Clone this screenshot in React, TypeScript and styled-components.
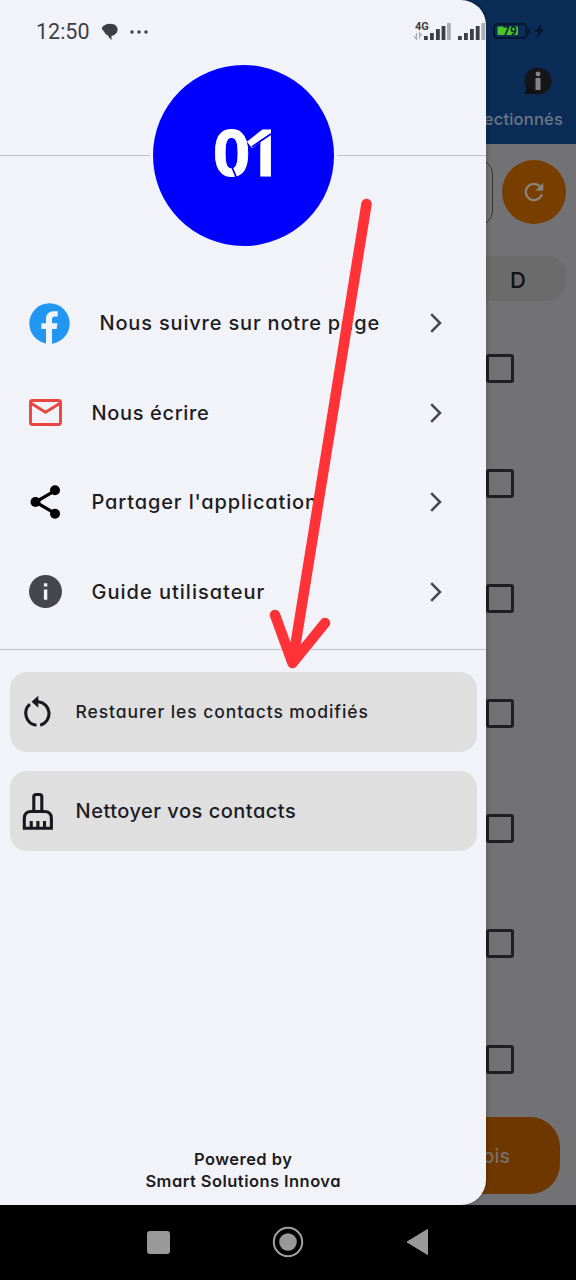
import React from "react";
import styled, { createGlobalStyle } from "styled-components";

const GlobalStyle = createGlobalStyle`
  * { box-sizing: border-box; }
  body { margin: 0; background: #000; font-family: Inter, "Noto Sans", sans-serif; font-feature-settings: "cv11"; }
`;

const Screen = styled.div`
  position: relative;
  display: flex;
  flex-direction: column;
  width: 576px;
  height: 1280px;
  overflow: hidden;
`;

const Page = styled.main`
  display: flex;
  flex-direction: column;
  height: 1205px;
  background: #727274;
`;

const Header = styled.header`
  display: flex;
  flex-direction: column;
  align-items: flex-end;
  height: 144px;
  padding: 65px 13px 0 0;
  background: #0b2c56;
  svg { margin-right: 11px; }
`;

const HeaderLabel = styled.span`
  margin-top: 11px;
  font-size: 16.5px;
  font-weight: 500;
  line-height: 22px;
  letter-spacing: 0.2px;
  color: #6c7787;
`;

const SearchRow = styled.div`
  display: flex;
  align-items: center;
  gap: 9.5px;
  height: 96px;
  padding-right: 10px;
`;

const SearchBox = styled.div`
  flex: 1;
  height: 67px;
  border: 1.5px solid #353539;
  border-radius: 15px;
`;

const RefreshButton = styled.button`
  display: grid;
  place-items: center;
  width: 64px;
  height: 64px;
  padding: 0;
  border: 0;
  border-radius: 50%;
  background: #783e00;
`;

const ColumnHeader = styled.div`
  display: flex;
  align-items: center;
  justify-content: flex-end;
  height: 45px;
  margin: 16px 10px 0 0;
  padding: 2px 40px 0 0;
  border-radius: 18px;
  background: #6b6b6b;
  color: #111115;
  font-size: 22px;
  font-weight: 500;
  line-height: 1;
`;

const CheckList = styled.div`
  display: flex;
  flex-direction: column;
  gap: 86.2px;
  margin: 52.5px 62px 0 0;
  align-items: flex-end;
`;

const CheckBox = styled.div`
  width: 28px;
  height: 29px;
  border: 3px solid #1e1e23;
  border-radius: 3px;
`;

const ActionButton = styled.div`
  display: flex;
  align-items: center;
  justify-content: flex-end;
  height: 77px;
  margin: auto 16px 11px 0;
  padding-right: 50px;
  border-radius: 30px;
  background: #6e3700;
  color: #77706b;
  font-size: 19.5px;
  font-weight: 500;
`;

const Drawer = styled.aside`
  position: absolute;
  top: 0;
  left: 0;
  display: flex;
  flex-direction: column;
  width: 486.4px;
  height: 1205px;
  border-radius: 0 25px 25px 0;
  background: #f2f3f9;
  box-shadow: 0 0 5px rgba(0, 0, 0, 0.3);
`;

const LogoRow = styled.div`
  display: flex;
  align-items: center;
  gap: 3px;
  height: 181px;
  margin-top: 65px;
`;

const Rule = styled.div`
  flex: 1;
  height: 1px;
  background: #bfc2c8;
`;

const Logo = styled.div`
  width: 181px;
  height: 181px;
  border-radius: 50%;
  background: #0000ff;
`;

const Menu = styled.nav`
  display: flex;
  flex-direction: column;
  margin-top: 32.4px;
`;

const MenuItem = styled.a`
  display: flex;
  align-items: center;
  gap: 29.5px;
  height: 89.6px;
  padding: 0 43px 0 29px;
  color: #1c1c22;
`;

const Label = styled.span<{ $size?: number; $spacing?: number }>`
  flex: 1;
  white-space: nowrap;
  font-size: ${(p) => p.$size ?? 20}px;
  letter-spacing: ${(p) => p.$spacing ?? 0.8}px;
  font-weight: 470;
  line-height: 28px;
  color: #1c1c22;
`;

const Divider = styled.div`
  height: 1px;
  margin-top: 12px;
  background: #bfc2c8;
`;

const Actions = styled.div`
  display: flex;
  flex-direction: column;
  gap: 19px;
  padding: 22px 9.5px 0;
`;

const Action = styled.button`
  display: flex;
  align-items: center;
  gap: 20px;
  height: 80px;
  padding: 0 12px 0 10px;
  border: 0;
  border-radius: 17px;
  background: #dfdfe0;
  font-family: inherit;
  font-feature-settings: inherit;
  text-align: left;
`;

const Footer = styled.footer`
  margin-top: auto;
  padding-bottom: 13px;
  text-align: center;
  font-size: 16.5px;
  font-weight: 600;
  letter-spacing: 0.45px;
  line-height: 22px;
  color: #1c1c22;
`;

const StatusBar = styled.div`
  position: absolute;
  top: 0;
  left: 0;
  display: flex;
  align-items: center;
  width: 576px;
  height: 63px;
  padding: 0 30px 0 36px;
`;

const Clock = styled.span`
  width: 65px;
  font-family: Roboto, sans-serif;
  font-size: 21.5px;
  line-height: 24px;
  color: #3d3f45;
`;

const StatusRight = styled.svg`
  margin-left: auto;
`;

const NavBar = styled.div`
  display: flex;
  align-items: center;
  justify-content: space-between;
  height: 75px;
  padding: 0 147px 1px 146px;
  background: #000;
`;

const Annotation = styled.svg`
  position: absolute;
  top: 0;
  left: 0;
  pointer-events: none;
`;

const Chevron = () => (
  <svg width="14" height="22" viewBox="0 0 14 22" fill="none" stroke="#47484e" strokeWidth="2.5">
    <path d="M2.2 2.2 L11 11 L2.2 19.8" />
  </svg>
);

const FacebookIcon = () => (
  <svg width="41" height="41" viewBox="0 0 41 41">
    <circle cx="20.5" cy="20.5" r="20.2" fill="#2196f3" />
    <path
      d="M17 41 V26 H12.4 V20.2 H17 V16.3 C17 11.2 20 8.3 24.7 8.3 H28.7 V13.5 H26 C23.8 13.5 23 14.8 23 16.5 V20.2 H28.5 L27.6 26 H23 V41 Z"
      fill="#f2f3f9"
    />
  </svg>
);

const MailIcon = () => (
  <svg width="33" height="27" viewBox="0 0 33 27" fill="none" stroke="#ea4540" strokeWidth="2.9">
    <rect x="1.5" y="1.5" width="30" height="24" rx="2" />
    <path d="M2 4.2 L16.5 13.2 L31 4.2" />
  </svg>
);

const ShareIcon = () => (
  <svg width="33" height="36" viewBox="0 0 33 36">
    <path d="M26.5 6.3 L6.5 18 L26.5 29.7" fill="none" stroke="#000" strokeWidth="3.2" />
    <circle cx="26" cy="6.3" r="5" />
    <circle cx="6.5" cy="18" r="5" />
    <circle cx="26" cy="29.7" r="5" />
  </svg>
);

const GuideIcon = () => (
  <svg width="33" height="33" viewBox="0 0 33 33">
    <circle cx="16.5" cy="16.5" r="16.5" fill="#46464f" />
    <path d="M14.9 8.3h3.4v3.3h-3.4zM14.9 14.6h3.4v10.2h-3.4z" fill="#f2f3f9" />
  </svg>
);

const RestoreIcon = () => (
  <svg width="36" height="38" viewBox="0 0 36 38" fill="none" stroke="#19191d" strokeWidth="3.1">
    <path d="M9.9 11.2 A12 12 0 0 0 16.5 32.2" />
    <path d="M17 8.7 H18.5 A12 12 0 0 1 20.2 32.2" />
    <path d="M11.5 8.7 L18.3 2.7 V14.7 Z" fill="#19191d" stroke="none" />
  </svg>
);

const BroomIcon = () => (
  <svg width="36" height="40" viewBox="0 0 36 40" fill="none" stroke="#19191d" strokeWidth="3.1">
    <path d="M13.8 20.5 V5.5 Q13.8 3.5 16.2 3.5 H19.4 Q21.8 3.5 21.8 5.5 V20.5" />
    <path d="M4.3 37.2 V27.5 Q4.3 20.5 11.3 20.5 H24.3 Q31.4 20.5 31.4 27.5 V37.2 Z" />
    <path d="M11.2 37 V30 M17.9 37 V30 M24.5 37 V30" />
  </svg>
);

const LogoMark = () => (
  <svg width="181" height="181" viewBox="0 0 181 181">
    <text
      x="60"
      y="110.5"
      fill="#fff"
      stroke="#fff"
      strokeWidth="0.8"
      fontFamily="Open Sans, sans-serif"
      fontWeight="700"
      fontSize="65"
      letterSpacing="-6.5"
    >
      01
    </text>
    <path d="M78.5 101 L83.5 113 M99 82 L106 77 L118 69" fill="none" stroke="#0000ff" strokeWidth="1.8" />
  </svg>
);

const menu = [
  { icon: <FacebookIcon />, text: "Nous suivre sur notre page", spacing: 0.82 },
  { icon: <MailIcon />, text: "Nous écrire", spacing: 0.65 },
  { icon: <ShareIcon />, text: "Partager l'application", spacing: 0.87 },
  { icon: <GuideIcon />, text: "Guide utilisateur", spacing: 1 },
];

export default function App() {
  return (
    <Screen>
      <GlobalStyle />
      <Page>
        <Header>
          <svg width="30" height="32" viewBox="0 0 30 32">
            <circle cx="16" cy="16" r="13.5" fill="#161618" />
            <path d="M5 20 Q5 26 2 28.5 Q8 30 14 28 Z" fill="#101012" />
            <circle cx="16" cy="9" r="2.4" fill="#858585" />
            <path d="M13.5 13h5v12h-5z" fill="#858585" />
          </svg>
          <HeaderLabel>ectionnés</HeaderLabel>
        </Header>
        <SearchRow>
          <SearchBox />
          <RefreshButton>
            <svg width="28" height="28" viewBox="0 0 24 24">
              <path
                d="M17.65 6.35C16.2 4.9 14.21 4 12 4c-4.42 0-7.99 3.58-7.99 8s3.57 8 7.99 8c3.73 0 6.84-2.55 7.73-6h-2.08c-.82 2.33-3.04 4-5.65 4-3.31 0-6-2.69-6-6s2.69-6 6-6c1.66 0 3.14.69 4.22 1.78L13 11h7V4l-2.35 2.35z"
                fill="#8a837c"
              />
            </svg>
          </RefreshButton>
        </SearchRow>
        <ColumnHeader>D</ColumnHeader>
        <CheckList>
          {[0, 1, 2, 3, 4, 5, 6].map((n) => (
            <CheckBox key={n} />
          ))}
        </CheckList>
        <ActionButton>ois</ActionButton>
      </Page>
      <NavBar>
        <svg width="25" height="25">
          <rect x="1" y="1" width="23" height="23" rx="3" fill="#999" />
        </svg>
        <svg width="32" height="32" viewBox="0 0 32 32">
          <circle cx="16" cy="16" r="14.2" fill="none" stroke="#a0a0a0" strokeWidth="2" />
          <circle cx="16" cy="16" r="8.8" fill="#999" />
        </svg>
        <svg width="24" height="28" viewBox="0 0 24 28">
          <path d="M2 14 L22.500 1.5 V26.5 Z" fill="#999" stroke="#999" strokeLinejoin="round" />
        </svg>
      </NavBar>
      <Drawer>
        <LogoRow>
          <Rule />
          <Logo>
            <LogoMark />
          </Logo>
          <Rule />
        </LogoRow>
        <Menu>
          {menu.map((m) => (
            <MenuItem key={m.text}>
              {m.icon}
              <Label $spacing={m.spacing}>{m.text}</Label>
              <Chevron />
            </MenuItem>
          ))}
        </Menu>
        <Divider />
        <Actions>
          <Action>
            <RestoreIcon />
            <Label $size={17.5} $spacing={0.92}>Restaurer les contacts modifiés</Label>
          </Action>
          <Action>
            <BroomIcon />
            <Label $spacing={0.5}>Nettoyer vos contacts</Label>
          </Action>
        </Actions>
        <Footer>
          Powered by
          <br />
          Smart Solutions Innova
        </Footer>
      </Drawer>
      <StatusBar>
        <Clock>12:50</Clock>
        <svg width="50" height="20" viewBox="0 0 50 20">
          <path d="M4 3 Q8 0.8 14 2.800 Q18 6 16 10.500 Q13.500 13.500 10.500 14 V18 Q8 16 7 13.500 Q4 12.500 3 9.500 L0.800 7 Q1 4 4 3Z" fill="#3d3f45" />
          <g fill="#3d3f45">
            <circle cx="31" cy="10" r="1.7" />
            <circle cx="38" cy="10" r="1.7" />
            <circle cx="45" cy="10" r="1.7" />
          </g>
        </svg>
        <StatusRight width="134" height="24" viewBox="412 20 134 24">
          <text x="415" y="30" fontFamily="Roboto, sans-serif" fontWeight="700" fontSize="11" fill="#3d3f45">4G</text>
          <path d="M416.5 33 V39 L414 36 M419.5 39 V33 L422 36" fill="none" stroke="#a8a9ad" strokeWidth="1.2" />
          <g fill="#3d3f45">
            <path d="M424 36h3.8v4h-3.8zM430 33h3.8v7H430zM436 29h3.8v11H436zM441.6 26h3.8v14h-3.8z" />
            <path d="M458 36h3.8v4H458zM464 33h3.8v7H464zM470 29h3.8v11H470zM475.8 26h3.8v14h-3.8z" />
          </g>
          <path d="M447 23h3.8v17H447zM481.5 23h3.8v17h-3.8z" fill="#acadb1" />
          <rect x="494" y="24" width="32.5" height="14" rx="3.5" fill="none" stroke="#06162c" strokeWidth="2" />
          <path d="M527.5 28.5h2.5v5h-2.5z" fill="#06162c" />
          <rect x="497.5" y="26.5" width="20.5" height="8.5" rx="1" fill="#4cc42a" />
          <text x="503" y="35" fontFamily="Roboto, sans-serif" fontWeight="700" fontSize="12" fill="#0b2630">79</text>
          <path d="M541.5 24 L534.5 32 H538 L536.5 38.5 L544 29.5 H540.5 Z" fill="#06162c" />
        </StatusRight>
      </StatusBar>
      <Annotation width="576" height="1280" viewBox="0 0 576 1280">
        <path
          d="M366.5 204 L292.5 663 M275 615 L292.5 663 L325 623"
          fill="none"
          stroke="#ff3238"
          strokeWidth="10.5"
          strokeLinecap="round"
          strokeLinejoin="round"
        />
      </Annotation>
    </Screen>
  );
}
